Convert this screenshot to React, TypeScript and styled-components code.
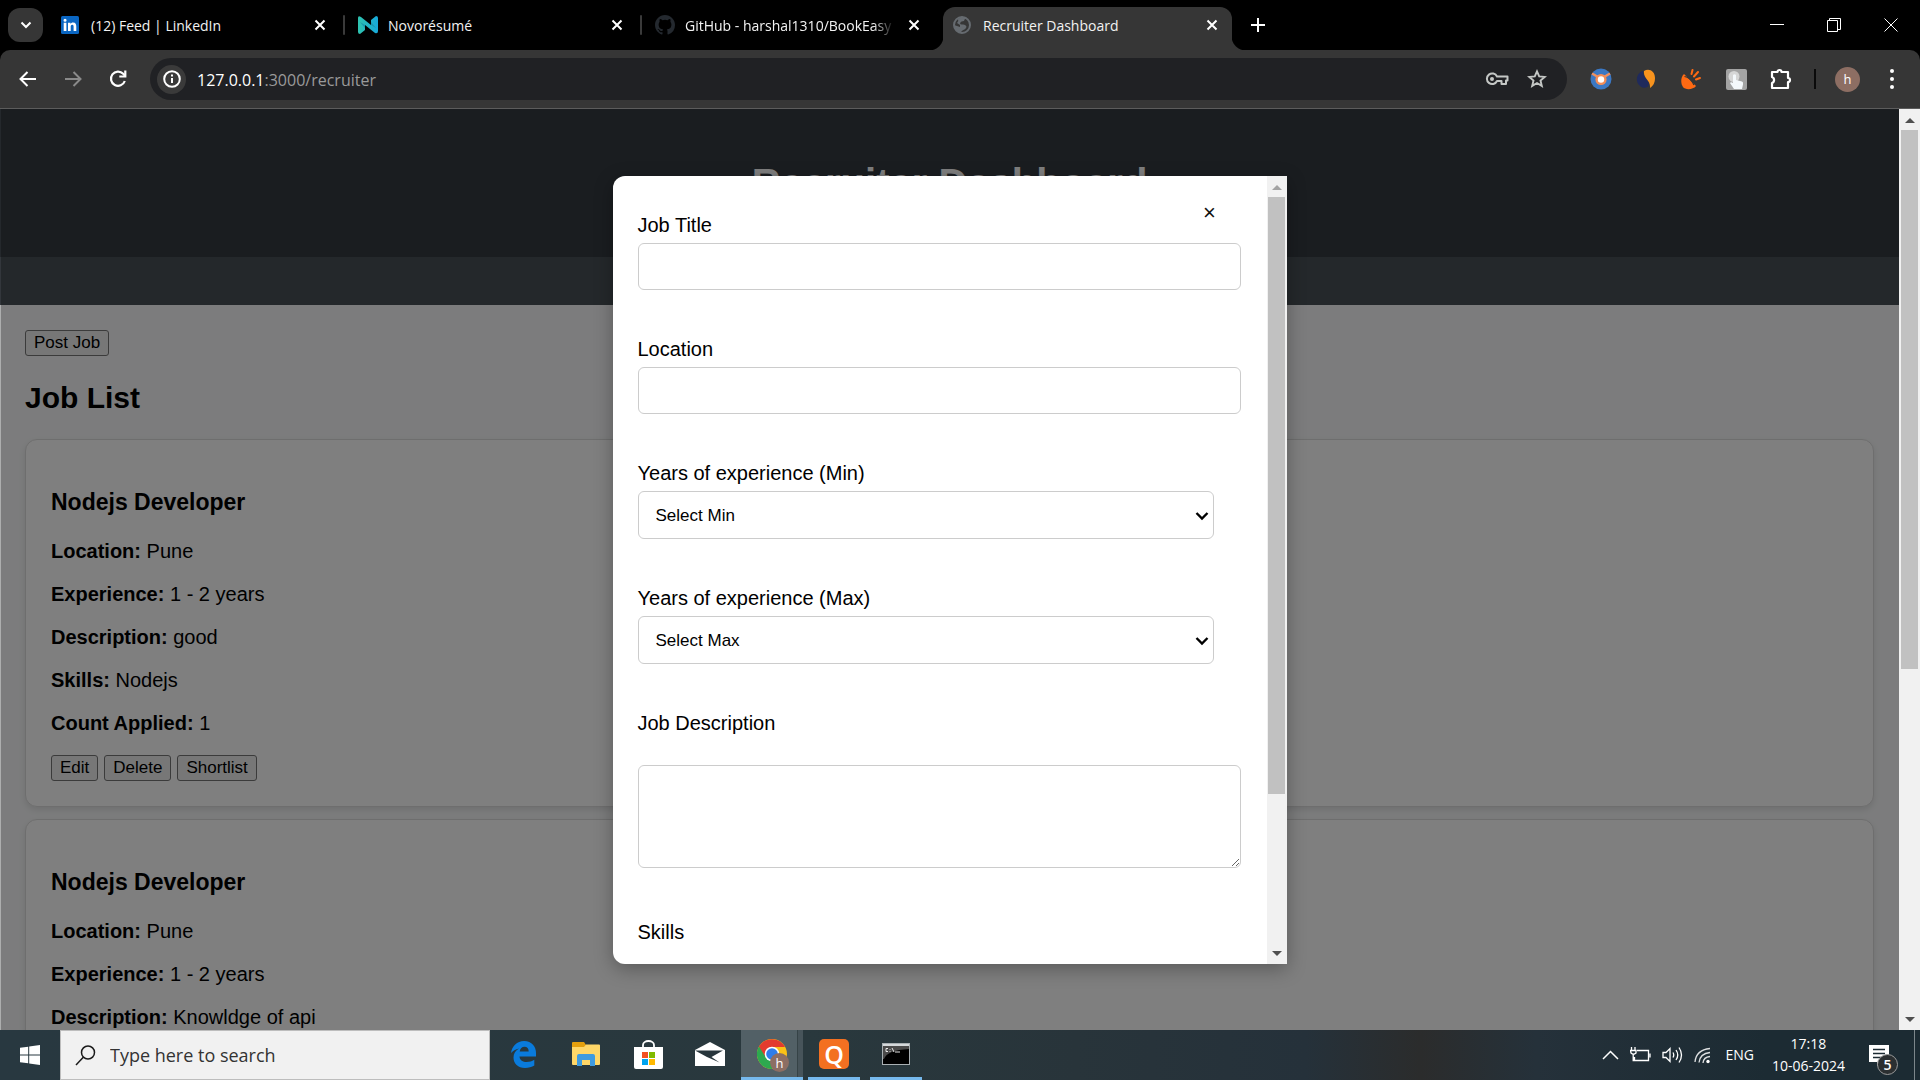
import React, { ReactNode } from "react";
import styled, { createGlobalStyle, css } from "styled-components";

const UI = `"Open Sans", "Noto Sans", sans-serif`;
const PAGE = `"Liberation Sans", Arial, sans-serif`;

const Global = createGlobalStyle`
  *, *::before, *::after { box-sizing: border-box; }
  html, body, #root { height: 100%; }
  body { margin: 0; overflow: hidden; background: #000; font-family: ${PAGE}; }
  button, input, select, textarea { font-family: inherit; }
  svg { display: block; flex: none; }
`;

const Screen = styled.div`
  display: flex;
  flex-direction: column;
  height: 100vh;
`;

/* ---------- browser chrome ---------- */

const IconButton = styled.button<{ $w?: number; $h?: number; $bg?: string; $round?: number }>`
  display: flex;
  align-items: center;
  justify-content: center;
  flex: none;
  width: ${(p) => p.$w ?? 32}px;
  height: ${(p) => p.$h ?? 32}px;
  padding: 0;
  border: 0;
  border-radius: ${(p) => p.$round ?? 0}px;
  background: ${(p) => p.$bg ?? "transparent"};
  color: #fff;
`;

const TabStrip = styled.div`
  display: flex;
  align-items: center;
  flex: none;
  height: 50px;
  padding: 0 1px 0 8px;
  background: #000;
`;

const Tabs = styled.div`
  display: flex;
  align-items: flex-end;
  align-self: stretch;
  margin-left: 4px;
`;

const Tab = styled.div<{ $active?: boolean }>`
  position: relative;
  display: flex;
  align-items: center;
  gap: 10px;
  width: 297px;
  height: 43px;
  padding: 0 14px 8px;
  ${(p) =>
    p.$active &&
    css`
      width: 289px;
      margin-left: 5px;
      padding: 0 10px 8px;
      border-radius: 12px 12px 0 0;
      background: #363636;
      &::before,
      &::after {
        content: "";
        position: absolute;
        bottom: 0;
        width: 14px;
        height: 14px;
      }
      &::before {
        left: -14px;
        background: radial-gradient(circle at 0 0, transparent 14px, #363636 15px);
      }
      &::after {
        right: -14px;
        background: radial-gradient(circle at 100% 0, transparent 14px, #363636 15px);
      }
    `}
`;

const TabIcon = styled.span`
  flex: none;
  width: 20px;
`;

const TabDivider = styled.span`
  width: 2px;
  height: 20px;
  margin: 0 -1px 15px;
  border-radius: 1px;
  background: #3a3a3a;
`;

const TabTitle = styled.span<{ $fade?: boolean }>`
  flex: 1;
  min-width: 0;
  padding-top: 2px;
  overflow: hidden;
  white-space: nowrap;
  font: 14px/20px ${UI};
  color: #f2f2f2;
  ${(p) => p.$fade && css`mask-image: linear-gradient(90deg, #000 90%, transparent);`}
`;

const WindowButtons = styled.div`
  display: flex;
  align-self: stretch;
  margin-left: auto;
`;

const ToolbarBack = styled.div`
  flex: none;
  background: #000;
`;

const Toolbar = styled.div`
  display: flex;
  align-items: center;
  height: 59px;
  padding: 0 6px 0 12px;
  border-bottom: 1px solid #5c5c5c;
  border-radius: 10px 10px 0 0;
  background: #363636;
`;

const NavButtons = styled.div`
  display: flex;
  gap: 13px;
`;

const AddressBar = styled.div`
  display: flex;
  align-items: center;
  flex: 1;
  height: 42px;
  margin-left: 16px;
  padding: 0 10px 0 7px;
  border-radius: 21px;
  background: #202124;
`;

const Url = styled.span`
  flex: 1;
  margin-left: 11px;
  padding-top: 1px;
  font: 16px/24px ${UI};
  color: #fff;
  span { color: #9a9a9a; }
`;

const Extensions = styled.div`
  display: flex;
  align-items: center;
  gap: 13px;
  margin-left: 18px;
`;

const BarDivider = styled.span`
  width: 2px;
  height: 20px;
  margin: 0 19px 0 17px;
  background: #0a0a0a;
`;

const MenuSlot = styled.div`
  margin-left: 10px;
`;

const Avatar = styled.span<{ $small?: boolean }>`
  display: flex;
  align-items: center;
  justify-content: center;
  width: ${(p) => (p.$small ? 19 : 25)}px;
  height: ${(p) => (p.$small ? 19 : 25)}px;
  border-radius: 50%;
  background: #8d6e63;
  color: #fff;
  font: 13px/18px ${UI};
`;

/* ---------- scrollbars ---------- */

const ScrollTrack = styled.div<{ $slim?: boolean }>`
  display: flex;
  flex-direction: column;
  flex: none;
  width: ${(p) => (p.$slim ? 20 : 21)}px;
  background: #f1f1f1;
`;

const ScrollArrow = styled.button<{ $down?: boolean; $muted?: boolean }>`
  display: flex;
  align-items: center;
  justify-content: center;
  flex: none;
  height: 21px;
  padding: ${(p) => (p.$down ? 0 : 2)}px 0 0;
  border: 0;
  background: transparent;
  &::before {
    content: "";
    border: 5px solid transparent;
    border-top-width: ${(p) => (p.$down ? 5 : 0)}px;
    border-bottom-width: ${(p) => (p.$down ? 0 : 5)}px;
    border-${(p) => (p.$down ? "top" : "bottom")}-color: ${(p) => (p.$muted ? "#a3a3a3" : "#505050")};
  }
`;

const ScrollRail = styled.div<{ $slim?: boolean }>`
  flex: 1;
  padding: 0 2px 0 ${(p) => (p.$slim ? 1 : 2)}px;
`;

const ScrollThumb = styled.div`
  background: #c1c1c1;
`;

/* ---------- web page ---------- */

const Viewport = styled.div`
  position: relative;
  display: flex;
  flex: 1;
  min-height: 0;
`;

const Page = styled.div`
  flex: 1;
  overflow: hidden;
  background: #f8f9fa;
  font-size: 20px;
  line-height: 23px;
  color: #000;
`;

const PageHeader = styled.header`
  padding: 25px;
  background: #343a40;
  color: #fff;
  text-align: center;
`;

const PageTitle = styled.h1`
  margin: 26px 0;
  font-size: 40px;
  line-height: 46px;
`;

const PageNav = styled.nav`
  height: 48px;
  background: #495057;
`;

const Main = styled.main`
  padding: 25px;
`;

const GreyButton = styled.button`
  height: 26px;
  padding: 0 8px;
  border: 1px solid #767676;
  border-radius: 3px;
  background: #efefef;
  font-size: 17px;
  line-height: 20px;
  color: #000;
`;

const SectionTitle = styled.h2`
  margin: 24px 0;
  font-size: 30px;
  line-height: 35px;
`;

const Card = styled.article`
  margin-bottom: 12px;
  padding: 25px;
  border: 1px solid #ddd;
  border-radius: 12px;
  background: #fff;
  box-shadow: 0 3px 6px rgba(0, 0, 0, 0.1);
`;

const CardTitle = styled.h3`
  margin: 24px 0;
  font-size: 23px;
  line-height: 27px;
`;

const Detail = styled.p`
  margin: 0 0 20px;
`;

const Actions = styled.div`
  display: flex;
  gap: 6px;
`;

const Overlay = styled.div`
  position: absolute;
  inset: 0 21px 0 0;
  display: flex;
  justify-content: center;
  padding: 67px 1px 66px 0;
  border-left: 1px solid rgba(0, 0, 0, 0.3);
  background: rgba(0, 0, 0, 0.5);
  background-clip: padding-box;
`;

const ModalShadow = styled.div`
  display: flex;
  border-radius: 12px 0 0 12px;
  box-shadow: 0 5px 19px rgba(0, 0, 0, 0.3);
`;

const Modal = styled.div`
  position: relative;
  display: flex;
  width: 674px;
  overflow: hidden;
  border-radius: 12px 0 0 12px;
  background: #fff;
`;

const Form = styled.form`
  flex: 1;
  overflow: hidden;
  padding: 37px 26px 0 25px;
  font-size: 20px;
  line-height: 24px;
`;

const Field = styled.div<{ $spaced?: boolean }>`
  display: flex;
  flex-direction: column;
  align-items: flex-start;
  gap: ${(p) => (p.$spaced ? 30 : 6)}px;
  margin-bottom: ${(p) => (p.$spaced ? 52 : 47)}px;
`;

const control = css`
  border: 1px solid #ccc;
  border-radius: 6px;
  background: #fff;
  font-size: 17px;
  color: #000;
`;

const TextInput = styled.input`
  ${control}
  width: 100%;
  height: 47px;
  padding: 0 12px;
`;

const SelectWrap = styled.div`
  position: relative;
  width: 576px;
  svg {
    position: absolute;
    top: 18px;
    right: 5px;
    pointer-events: none;
  }
`;

const SelectBox = styled.select`
  ${control}
  display: block;
  appearance: none;
  width: 100%;
  height: 48px;
  padding: 0 17px;
`;

const TextArea = styled.textarea`
  ${control}
  display: block;
  width: 100%;
  height: 103px;
  padding: 12px;
  resize: vertical;
`;

const CloseButton = styled.button`
  position: absolute;
  top: 25px;
  right: 65px;
  width: 24px;
  height: 24px;
  padding: 0;
  border: 0;
  background: none;
  font: 22px/24px ${PAGE};
  color: #111;
`;

/* ---------- taskbar ---------- */

const Taskbar = styled.footer`
  display: flex;
  flex: none;
  height: 50px;
  background: linear-gradient(90deg, #283840 0, #29383d 42%, #28343a 56%, #25313a 68%, #2b2c2c 74%, #25313a 80%, #1c2b33 92%);
  color: #fff;
  font-family: ${UI};
`;

const SearchLabel = styled.label`
  display: flex;
  align-items: center;
  gap: 14px;
  width: 430px;
  padding-left: 14px;
  border: 1px solid #bdbdbd;
  background: #f1f1f1;
`;

const SearchInput = styled.input`
  flex: 1;
  min-width: 0;
  padding: 0;
  border: 0;
  outline: 0;
  background: transparent;
  font-size: 18px;
  color: #333;
  &::placeholder { color: #333; opacity: 1; }
`;

const TaskApps = styled.div`
  display: flex;
  margin-left: 3px;
`;

const TaskButton = styled.button<{ $running?: boolean; $active?: boolean }>`
  position: relative;
  display: flex;
  align-items: center;
  justify-content: center;
  width: 62px;
  padding: 0 0 2px;
  border: 0;
  background: ${(p) =>
    p.$active ? "linear-gradient(90deg, #526066 56px, #364347 56px, #364347 57px, #47545a 57px)" : "transparent"};
  ${(p) =>
    p.$running &&
    css`
      &::after {
        content: "";
        position: absolute;
        right: ${p.$active ? 0 : 5}px;
        bottom: 0;
        left: ${p.$active ? 0 : 5}px;
        height: 3px;
        background: #76b9ed;
      }
    `}
`;

const AppBadge = styled.span`
  position: absolute;
  right: 14px;
  bottom: 8px;
`;

const QTile = styled.span`
  display: flex;
  align-items: center;
  justify-content: center;
  width: 30px;
  height: 30px;
  border-radius: 5px;
  background: #f37021;
  color: #fff;
  font: 600 25px/28px ${UI};
`;

const Tray = styled.div`
  display: flex;
  align-items: center;
  gap: 11px;
  margin-left: auto;
  font-size: 14px;
  line-height: 22px;
`;

const Language = styled.span`
  margin-left: 3px;
`;

const Clock = styled.time`
  display: flex;
  flex-direction: column;
  margin: 0 13px 0 7px;
  text-align: center;
`;

const Notify = styled.button`
  position: relative;
  width: 34px;
  height: 50px;
  padding: 0;
  border: 0;
  background: none;
`;

const Count = styled.span`
  position: absolute;
  right: 5px;
  bottom: 5px;
  display: flex;
  align-items: center;
  justify-content: center;
  width: 21px;
  height: 21px;
  border: 1px solid #9a9a9a;
  border-radius: 50%;
  background: #2b2f31;
  color: #fff;
  font: 600 14px/18px ${UI};
`;

const ShowDesktop = styled.span`
  align-self: stretch;
  width: 6px;
  border-left: 1px solid #7c868b;
`;

/* ---------- icons ---------- */

const Cross = ({ size = 18 }: { size?: number }) => (
  <svg width={size} height={size} viewBox="0 0 18 18" fill="none" stroke="currentColor" strokeWidth="2">
    <path d="M4.5 4.5l9 9M13.5 4.5l-9 9" />
  </svg>
);

const LinkedIn = () => (
  <svg width="18" height="18" viewBox="0 0 18 18">
    <rect width="18" height="18" rx="1.5" fill="#0a66c2" />
    <path
      fill="#fff"
      d="M2.7 6.8h2.7V15H2.7zM4.05 2.7a1.55 1.55 0 110 3.1 1.55 1.55 0 010-3.1zM7 6.8h2.5v1.1c.4-.7 1.3-1.4 2.6-1.4 2.6 0 3.2 1.7 3.2 4V15h-2.7v-4c0-1 0-2.2-1.3-2.2-1.4 0-1.6 1-1.6 2.1V15H7z"
    />
  </svg>
);

const Novo = () => (
  <svg width="20" height="18" viewBox="0 0 20 18">
    <defs>
      <linearGradient id="novo" x1="0" x2="1">
        <stop offset="0" stopColor="#2fc3ae" />
        <stop offset="1" stopColor="#17a9dc" />
      </linearGradient>
    </defs>
    <path fill="url(#novo)" d="M0 2Q0-1 3 1l10 8V4l5-4q2 0 2 2v13q0 3-3 2L7 9v5l-5 4q-2 0-2-2z" />
    <path fill="#138ba9" d="M7 9v3L2 6zM13 9V6l5 6z" opacity=".7" />
  </svg>
);

const GitHub = () => (
  <svg width="20" height="20" viewBox="0 0 16 16">
    <path
      fill="#24292f"
      d="M8 0C3.58 0 0 3.58 0 8c0 3.54 2.29 6.53 5.47 7.59.4.07.55-.17.55-.38 0-.19-.01-.82-.01-1.49-2.01.37-2.53-.49-2.69-.94-.09-.23-.48-.94-.82-1.13-.28-.15-.68-.52-.01-.53.63-.01 1.08.58 1.23.82.72 1.21 1.87.87 2.33.66.07-.52.28-.87.51-1.07-1.78-.2-3.64-.89-3.64-3.95 0-.87.31-1.59.82-2.15-.08-.2-.36-1.02.08-2.12 0 0 .67-.21 2.2.82a7.6 7.6 0 014 0c1.53-1.04 2.2-.82 2.2-.82.44 1.1.16 1.92.08 2.12.51.56.82 1.27.82 2.15 0 3.07-1.87 3.75-3.65 3.95.29.25.54.73.54 1.48 0 1.07-.01 1.93-.01 2.2 0 .21.15.46.55.38A8.01 8.01 0 0016 8c0-4.42-3.58-8-8-8z"
    />
  </svg>
);

const Globe = () => (
  <svg width="18" height="18" viewBox="0 0 18 18">
    <circle cx="9" cy="9" r="8" fill="#363636" stroke="#666b70" strokeWidth="2" />
    <path fill="#666b70" d="M8 1q5 0 6 1-3 1-3 3-3 0-4 2 0 2 3 1.500 3 0 3.500 2.500-1 3-4 3.500L7 17Q1 15 1 9l6 2V9L4 7q2-2 1-4z" />
  </svg>
);

const Arrow = ({ flip, color }: { flip?: boolean; color: string }) => (
  <svg width="20" height="20" viewBox="0 0 20 20" fill="none" stroke={color} strokeWidth="2">
    <path d={flip ? "M2 10h15M10.5 3l7 7-7 7" : "M18 10H3M9.5 3l-7 7 7 7"} />
  </svg>
);

const Reload = () => (
  <svg width="20" height="20" viewBox="0 0 20 20" fill="none" stroke="#fff" strokeWidth="2.2">
    <path d="M16.8 12a7.1 7.1 0 11-1.6-7.2L17 6.7" />
    <path d="M17.3 1.5v6h-6" />
  </svg>
);

const Info = () => (
  <svg width="18" height="18" viewBox="0 0 18 18" fill="none" stroke="#fff" strokeWidth="2">
    <circle cx="9" cy="9" r="7.8" />
    <path d="M9 8v5M9 4.6v2" />
  </svg>
);

const Key = () => (
  <svg width="24" height="16" viewBox="0 0 24 16" fill="none" stroke="#c4c7c5" strokeWidth="2">
    <path d="M12 5.5h10.5v4H21V13h-4.5V10H12a5.3 5.3 0 110-4.5z" strokeLinejoin="round" />
    <circle cx="7" cy="8" r="2" fill="#c4c7c5" stroke="none" />
  </svg>
);

const Star = () => (
  <svg width="20" height="20" viewBox="0 0 20 20" fill="none" stroke="#c4c7c5" strokeWidth="1.9">
    <path d="M10 2.4l2.2 5 5.5.5-4.2 3.6 1.3 5.4-4.8-2.9-4.8 2.9 1.3-5.4L2.3 7.9l5.5-.5z" />
  </svg>
);

const ExtBlue = () => (
  <svg width="22" height="22" viewBox="0 0 22 22">
    <circle cx="11" cy="11" r="10.5" fill="#3b78c4" />
    <path d="M2 5.500l6 3.500M20 5.500l-6 3.500" stroke="#f0905f" strokeWidth="2.500" />
    <circle cx="11" cy="11.5" r="5.600" fill="#f28c57" />
    <circle cx="11" cy="11.5" r="3.200" fill="#fff" />
  </svg>
);

const ExtSwirl = () => (
  <svg width="20" height="20" viewBox="0 0 20 20">
    <path fill="#1f2a5c" d="M7 2C0 4-1 13 4 17c3 3 9 2 9-2 0-5-6-6-6-13z" />
    <path fill="#f7931e" d="M8 2c5-3 11 0 11 7 0 5-2 8-5 10 1-8-7-9-6-17z" />
  </svg>
);

const ExtPlug = () => (
  <svg width="20" height="22" viewBox="0 0 20 22">
    <path fill="#ff6a13" d="M3 6l12 12c-3 4-11 4-13 1S-1 10 3 6z" />
    <path d="M3.500 8.500Q9 9 13 17" stroke="#363636" strokeWidth="1.200" fill="none" />
    <path d="M10.500 6l1-4M13 8.500l4-4.500M15 11.500l4-1.500" stroke="#ff6a13" strokeWidth="2" strokeLinecap="round" />
  </svg>
);

const ExtTouch = () => (
  <svg width="21" height="21" viewBox="0 0 21 21">
    <rect width="21" height="21" rx="2" fill="#a3a3a3" />
    <circle cx="8" cy="7.500" r="5.500" fill="#d6d6d6" />
    <path fill="#f4f8fb" d="M7 6q1.500-1.500 3 0v5l6 1.500q1.500.5 1 3l-1 4.500H8l-4-6q1-1.500 3 0z" />
  </svg>
);

const Puzzle = () => (
  <svg width="22" height="22" viewBox="0 0 22 22" fill="none" stroke="#fff" strokeWidth="2.200" strokeLinejoin="round">
    <path d="M2 4h5.500a2 2 0 014 0H18v6a2 2 0 010 4v6H2v-5a3.200 3.200 0 000-6z" />
  </svg>
);

const WinLogo = () => (
  <svg width="20" height="20" viewBox="0 0 20 20" fill="#fff">
    <path d="M0 2.800L8.200 1.700v7.700H0zM9.200 1.500L20 0v9.400H9.200zM0 10.400h8.200v7.900L0 17.200zM9.200 10.400H20V20L9.200 18.500z" />
  </svg>
);

const Magnifier = () => (
  <svg width="21" height="21" viewBox="0 0 21 21" fill="none" stroke="#1a1a1a" strokeWidth="1.500">
    <circle cx="13" cy="7.500" r="6.500" />
    <path d="M8.300 12.300L1 20" />
  </svg>
);

const Edge = () => (
  <svg width="26" height="27" viewBox="0 0 26 27">
    <path
      fill="#0a7bdc"
      d="M0 12C1 5 6 0 13 0c8 0 12 6 12 12v3.500H8.500c.3 4 3.500 5.500 7 5.500 3 0 5.500-.8 7.800-2.200v5.700C21 26 17.500 27 14 27 7 27 2.500 22.500 2.500 16.500c0-4 2-7 5.500-9C4.500 8 2 10 0 12zm8.700-1.500h9c0-3-1.500-4.800-4.200-4.800-2.600 0-4.400 1.800-4.800 4.800z"
    />
  </svg>
);

const Folder = () => (
  <svg width="28" height="24" viewBox="0 0 28 24">
    <path fill="#e5a00d" d="M0 1q0-1 1-1h11l2 3v6H0z" />
    <path fill="#ffd768" d="M0 5h12l2-2.500h13q1 0 1 1V22q0 1-1 1H1q-1 0-1-1z" />
    <path fill="#3f9be0" d="M5 24V14q0-2 2-2h14q2 0 2 2v10h-5v-6h-8v6z" />
  </svg>
);

const Store = () => (
  <svg width="29" height="29" viewBox="0 0 29 29">
    <path d="M9 8V5a5.500 4 0 0111 0v3" fill="none" stroke="#fff" strokeWidth="1.800" />
    <path fill="#fff" d="M0 7h29v20q0 2-2 2H2q-2 0-2-2z" />
    <path fill="#f25022" d="M8 12h6v6H8z" />
    <path fill="#7fba00" d="M15 12h6v6h-6z" />
    <path fill="#00a4ef" d="M8 19h6v6H8z" />
    <path fill="#ffb900" d="M15 19h6v6h-6z" />
  </svg>
);

const Mail = () => (
  <svg width="30" height="24" viewBox="0 0 30 24">
    <path fill="#fff" d="M0 8L15 0l15 8v16H0z" />
    <path fill="#27353b" d="M0 8.500h28L16.500 15l8 5.500L12 15z" />
  </svg>
);

const ChromeLogo = () => (
  <svg width="30" height="30" viewBox="0 0 30 30">
    <circle cx="15" cy="15" r="15" fill="#fbc116" />
    <path fill="#2da94f" d="M15 15L2 7.500a15 15 0 0013 22.500l6.500-11.300z" />
    <path fill="#e33b2e" d="M2 7.500L8.500 18 15 8h13A15 15 0 002 7.500z" />
    <circle cx="15" cy="15" r="7.300" fill="#fff" />
    <circle cx="15" cy="15" r="5.800" fill="#2f7de9" />
  </svg>
);

const Terminal = () => (
  <svg width="28" height="22" viewBox="0 0 28 22">
    <rect x=".5" y=".5" width="27" height="21" fill="#000" stroke="#a9b0b3" />
    <path fill="#4a4a4a" d="M1 3h26v3Q5 7 2 16H1z" />
    <path fill="#d5d9db" d="M1 1h26v2H1z" />
    <path d="M6 5.500H4v3h2M8 6v.8M8 8v.8M10 5l2 4M13 9h5" stroke="#e8e8e8" fill="none" strokeWidth="1" />
  </svg>
);

const TrayChevron = () => (
  <svg width="17" height="10" viewBox="0 0 17 10" fill="none" stroke="#fff" strokeWidth="1.500">
    <path d="M1 9l7.500-7.500L16 9" />
  </svg>
);

const Battery = () => (
  <svg width="21" height="16" viewBox="0 0 21 16" fill="none" stroke="#fff" strokeWidth="1.300">
    <path d="M7 3.500h11.500v10H4.500V10M20 6.500v4M1.500 0v3M5 0v3M.5 3.500H6V6q-2.500 2.500-5 0zM3.200 7.500v6h3" />
  </svg>
);

const Speaker = () => (
  <svg width="21" height="18" viewBox="0 0 21 18" fill="none" stroke="#fff" strokeWidth="1.300">
    <path d="M1 6.500h3l4-4v13l-4-4H1zM11 6.500q1.500 2.500 0 5M14 4q3.500 5 0 10M17 1.500q5 7.500 0 15" />
  </svg>
);

const Wifi = () => (
  <svg width="17" height="17" viewBox="0 0 17 17" fill="none" stroke="#fff" strokeWidth="1.300">
    <path d="M1 15Q2 3 16 1.500M5 15.500Q6 6.500 16 5.500M9 16q.5-6 7-6.500" opacity=".85" />
    <circle cx="14" cy="14.500" r="1.700" fill="#fff" stroke="none" />
  </svg>
);

/* ---------- page data ---------- */

const tabs: { icon: ReactNode; title: string; fade?: boolean; active?: boolean; divider?: boolean }[] = [
  { icon: <LinkedIn />, title: "(12) Feed | LinkedIn", divider: true },
  { icon: <Novo />, title: "Novorésumé", divider: true },
  { icon: <GitHub />, title: "GitHub - harshal1310/BookEasy", fade: true },
  { icon: <Globe />, title: "Recruiter Dashboard", active: true },
];

const jobs = [
  { title: "Nodejs Developer", location: "Pune", experience: "1 - 2 years", description: "good", skills: "Nodejs", count: 1 },
  { title: "Nodejs Developer", location: "Pune", experience: "1 - 2 years", description: "Knowldge of api", skills: "Nodejs", count: 1 },
];

const years = [0, 1, 2, 3, 4, 5];

const YearsField = ({ id, label, hint }: { id: string; label: string; hint: string }) => (
  <Field>
    <label htmlFor={id}>{label}</label>
    <SelectWrap>
      <SelectBox id={id} defaultValue="">
        <option value="">{hint}</option>
        {years.map((y) => (
          <option key={y} value={y}>{y}</option>
        ))}
      </SelectBox>
      <svg width="14" height="14" viewBox="0 0 14 14" fill="none" stroke="#000" strokeWidth="2.400">
        <path d="M1.500 4l5.500 5.500L12.500 4" />
      </svg>
    </SelectWrap>
  </Field>
);

export default function App() {
  return (
    <Screen>
      <Global />
      <TabStrip>
        <IconButton aria-label="Search tabs" $w={35} $h={34} $bg="#363636" $round={12}>
          <svg width="12" height="12" viewBox="0 0 12 12" fill="none" stroke="#fff" strokeWidth="2">
            <path d="M1.500 3.500L6 8l4.500-4.500" />
          </svg>
        </IconButton>
        <Tabs>
          {tabs.map((t) => (
            <React.Fragment key={t.title}>
              <Tab $active={t.active}>
                <TabIcon>{t.icon}</TabIcon>
                <TabTitle $fade={t.fade}>{t.title}</TabTitle>
                <IconButton aria-label="Close tab" $w={20} $h={20}><Cross /></IconButton>
              </Tab>
              {t.divider && <TabDivider />}
            </React.Fragment>
          ))}
        </Tabs>
        <IconButton aria-label="New tab" $w={52}>
          <svg width="16" height="16" viewBox="0 0 16 16" stroke="#fff" strokeWidth="2">
            <path d="M8 1v14M1 8h14" />
          </svg>
        </IconButton>
        <WindowButtons>
          <IconButton aria-label="Minimize" $w={57} $h={50}>
            <svg width="14" height="14" viewBox="0 0 14 14" stroke="#fff"><path d="M0 6.500h14" /></svg>
          </IconButton>
          <IconButton aria-label="Restore" $w={57} $h={50}>
            <svg width="14" height="14" viewBox="0 0 14 14" stroke="#fff" fill="none">
              <path d="M.5 2.500h10v11H.5zM2.500 2.500v-2h11v11h-3" />
            </svg>
          </IconButton>
          <IconButton aria-label="Close window" $w={57} $h={50}>
            <svg width="14" height="14" viewBox="0 0 14 14" stroke="#fff"><path d="M.5.5l13 13M13.500.5l-13 13" /></svg>
          </IconButton>
        </WindowButtons>
      </TabStrip>

      <ToolbarBack>
        <Toolbar>
          <NavButtons>
            <IconButton aria-label="Back"><Arrow color="#fff" /></IconButton>
            <IconButton aria-label="Forward"><Arrow flip color="#8a8a8a" /></IconButton>
            <IconButton aria-label="Reload"><Reload /></IconButton>
          </NavButtons>
          <AddressBar>
            <IconButton aria-label="Site information" $w={29} $h={29} $bg="#3a3a3a" $round={15}><Info /></IconButton>
            <Url>127.0.0.1<span>:3000/recruiter</span></Url>
            <IconButton aria-label="Passwords" $w={40}><Key /></IconButton>
            <IconButton aria-label="Bookmark" $w={40}><Star /></IconButton>
          </AddressBar>
          <Extensions>
            <IconButton aria-label="Extension"><ExtBlue /></IconButton>
            <IconButton aria-label="Extension"><ExtSwirl /></IconButton>
            <IconButton aria-label="Extension"><ExtPlug /></IconButton>
            <IconButton aria-label="Extension"><ExtTouch /></IconButton>
            <IconButton aria-label="Extensions"><Puzzle /></IconButton>
          </Extensions>
          <BarDivider />
          <Avatar>h</Avatar>
          <MenuSlot>
            <IconButton aria-label="Menu" $w={44}>
              <svg width="4" height="22" viewBox="0 0 4 22" fill="#fff">
                <circle cx="2" cy="3" r="2" /><circle cx="2" cy="11" r="2" /><circle cx="2" cy="19" r="2" />
              </svg>
            </IconButton>
          </MenuSlot>
        </Toolbar>
      </ToolbarBack>

      <Viewport>
        <Page>
          <PageHeader><PageTitle>Recruiter Dashboard</PageTitle></PageHeader>
          <PageNav />
          <Main>
            <GreyButton>Post Job</GreyButton>
            <SectionTitle>Job List</SectionTitle>
            {jobs.map((job, i) => (
              <Card key={i}>
                <CardTitle>{job.title}</CardTitle>
                <Detail><strong>Location:</strong> {job.location}</Detail>
                <Detail><strong>Experience:</strong> {job.experience}</Detail>
                <Detail><strong>Description:</strong> {job.description}</Detail>
                <Detail><strong>Skills:</strong> {job.skills}</Detail>
                <Detail><strong>Count Applied:</strong> {job.count}</Detail>
                <Actions>
                  <GreyButton>Edit</GreyButton>
                  <GreyButton>Delete</GreyButton>
                  <GreyButton>Shortlist</GreyButton>
                </Actions>
              </Card>
            ))}
          </Main>
        </Page>
        <ScrollTrack>
          <ScrollArrow aria-label="Scroll up" />
          <ScrollRail><ScrollThumb style={{ height: `${(539 / 879) * 100}%` }} /></ScrollRail>
          <ScrollArrow aria-label="Scroll down" $down />
        </ScrollTrack>

        <Overlay>
          <ModalShadow>
            <Modal role="dialog" aria-label="Post Job">
              <Form>
                <Field>
                  <label htmlFor="title">Job Title</label>
                  <TextInput id="title" />
                </Field>
                <Field>
                  <label htmlFor="location">Location</label>
                  <TextInput id="location" />
                </Field>
                <YearsField id="min" label="Years of experience (Min)" hint="Select Min" />
                <YearsField id="max" label="Years of experience (Max)" hint="Select Max" />
                <Field $spaced>
                  <label htmlFor="description">Job Description</label>
                  <TextArea id="description" />
                </Field>
                <Field $spaced>
                  <label htmlFor="skills">Skills</label>
                  <TextInput id="skills" />
                </Field>
              </Form>
              <ScrollTrack $slim>
                <ScrollArrow aria-label="Scroll form up" $muted />
                <ScrollRail $slim><ScrollThumb style={{ height: `${(597 / 746) * 100}%` }} /></ScrollRail>
                <ScrollArrow aria-label="Scroll form down" $down />
              </ScrollTrack>
              <CloseButton aria-label="Close">×</CloseButton>
            </Modal>
          </ModalShadow>
        </Overlay>
      </Viewport>

      <Taskbar>
        <IconButton aria-label="Start" $w={60} $h={50}><WinLogo /></IconButton>
        <SearchLabel>
          <Magnifier />
          <SearchInput aria-label="Search" placeholder="Type here to search" />
        </SearchLabel>
        <TaskApps>
          <TaskButton aria-label="Edge"><Edge /></TaskButton>
          <TaskButton aria-label="File Explorer"><Folder /></TaskButton>
          <TaskButton aria-label="Store"><Store /></TaskButton>
          <TaskButton aria-label="Mail"><Mail /></TaskButton>
          <TaskButton aria-label="Chrome" $running $active>
            <ChromeLogo />
            <AppBadge><Avatar $small>h</Avatar></AppBadge>
          </TaskButton>
          <TaskButton aria-label="Q" $running><QTile>Q</QTile></TaskButton>
          <TaskButton aria-label="Command Prompt" $running><Terminal /></TaskButton>
        </TaskApps>
        <Tray>
          <TrayChevron />
          <Battery />
          <Speaker />
          <Wifi />
          <Language>ENG</Language>
          <Clock>
            <span>17:18</span>
            <span>10-06-2024</span>
          </Clock>
          <Notify aria-label="Notifications">
            <svg width="20" height="24" viewBox="0 0 20 24">
              <path fill="#fff" d="M0 2h20v17h-8l-4 4v-4H0z" />
              <path d="M4 6.500h12M4 10.500h12M4 14.500h8" stroke="#1c2b33" strokeWidth="1.500" />
            </svg>
            <Count>5</Count>
          </Notify>
          <ShowDesktop />
        </Tray>
      </Taskbar>
    </Screen>
  );
}
